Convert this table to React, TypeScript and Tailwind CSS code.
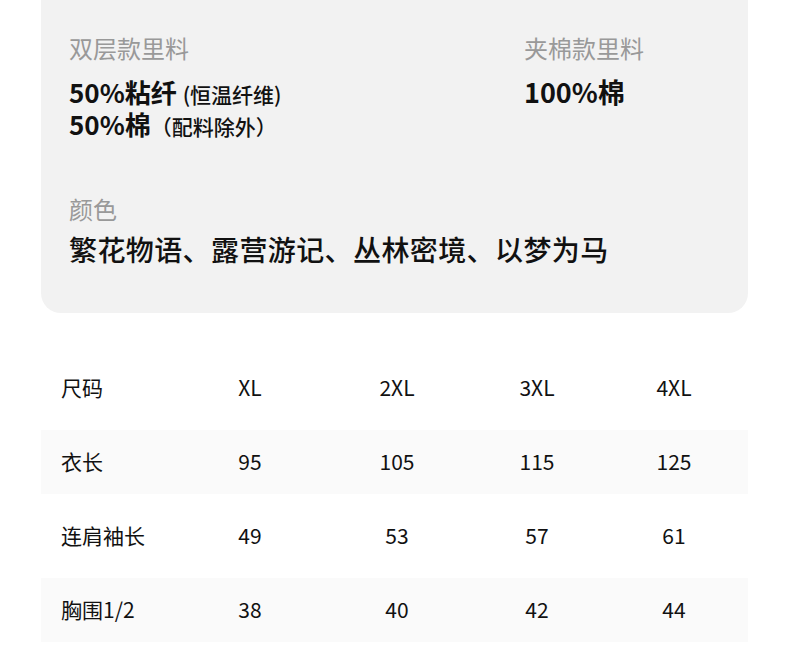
const cjk = "font-['Noto_Sans_CJK_SC','Noto_Sans',sans-serif]";

const sizes = ['XL', '2XL', '3XL', '4XL'];
const rows = [
  { label: '衣长', values: ['95', '105', '115', '125'], shaded: true },
  { label: '连肩袖长', values: ['49', '53', '57', '61'], shaded: false },
  { label: '胸围1/2', values: ['38', '40', '42', '44'], shaded: true },
];

function Row({ label, values, shaded }: { label: string; values: string[]; shaded: boolean }) {
  return (
    <div
      className={`grid grid-cols-[135px_148px_146px_134px_140px] h-[64px] items-center text-[21px] text-[#111] ${shaded ? 'bg-[#fafafa]' : ''}`}>
      <div className="pl-5">{label}</div>
      {values.map((v, i) =>
      <div key={i} className="text-center">{v}</div>
      )}
    </div>);
}

export default function App() {
  return (
    <div className={`w-[790px] h-[648px] bg-white overflow-hidden ${cjk}`}>
      {/* Fabric card */}
      <div className="ml-[41px] w-[707px] h-[313px] bg-[#f2f2f2] rounded-b-[20px] pl-7 pt-[32px]">
        <div className="grid grid-cols-[455px_1fr]">
          <div>
            <div className="text-[24px] leading-[32px] text-[#999]">双层款里料</div>
            <div className="mt-[13px] text-[26px] leading-[29px] font-semibold text-[#111]">
              <div>50%粘纤 <span className="text-[21px] font-medium">(恒温纤维)</span></div>
              <div>50%棉<span className="text-[21px] font-medium">（配料除外）</span></div>
            </div>
          </div>
          <div>
            <div className="text-[24px] leading-[32px] text-[#999]">夹棉款里料</div>
            <div className="mt-[13px] text-[27px] leading-[29px] font-semibold text-[#111]">100%棉</div>
          </div>
        </div>

        <div className="mt-[52px] text-[24px] leading-[32px] text-[#999]">颜色</div>
        <div className="mt-[6px] text-[28px] leading-[36px] font-medium tracking-[0.4px] text-[#111]">
          繁花物语、露营游记、丛林密境、以梦为马
        </div>
      </div>

      {/* Size table */}
      <div className="ml-[41px] w-[707px] mt-[43px] flex flex-col gap-[10px]">
        <div className="grid grid-cols-[135px_148px_146px_134px_140px] h-[64px] items-center text-[21px] text-[#111]">
          <div className="pl-5">尺码</div>
          {sizes.map((s) =>
          <div key={s} className="text-center">{s}</div>
          )}
        </div>
        {rows.map((r) =>
        <Row key={r.label} {...r} />
        )}
      </div>
    </div>);
}
